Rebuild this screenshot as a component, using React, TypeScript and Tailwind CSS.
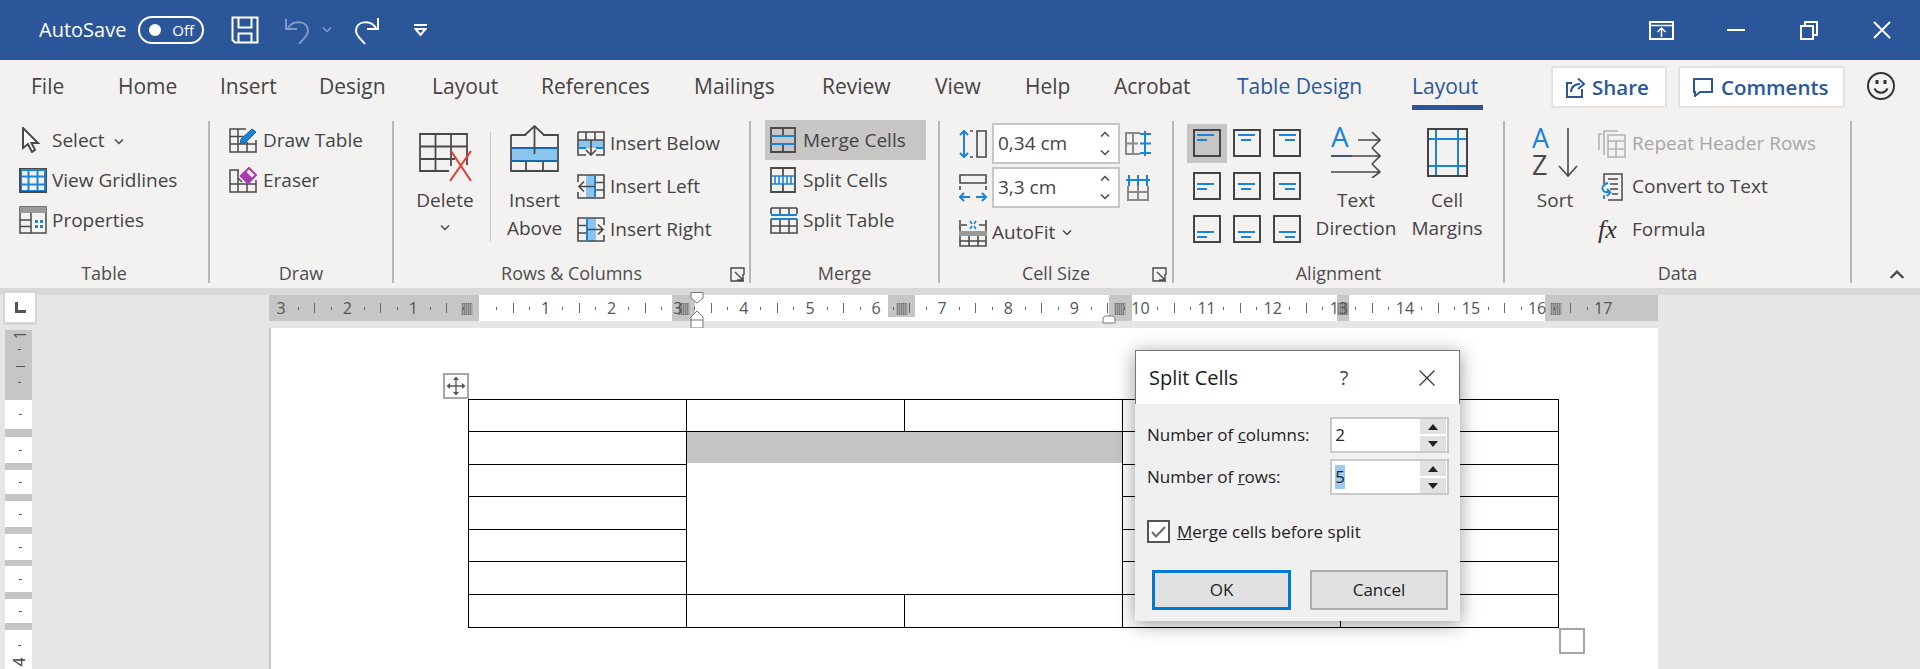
import type { ReactNode } from 'react';
import clsx from 'clsx';

const DK = '#4a4a4a';
const BL = '#1b84d8';
const LB = '#8cc4f0';

function Svg({ w, h, className, children }: { w: number; h: number; className?: string; children: ReactNode }) {
  return (
    <svg width={w} height={h} viewBox={`0 0 ${w} ${h}`} fill="none" stroke={DK} strokeWidth={2} className={clsx('shrink-0', className)}>
      {children}
    </svg>
  );
}

function Chevron({ up, color = DK, className }: { up?: boolean; color?: string; className?: string }) {
  return (
    <Svg w={10} h={6} className={className}>
      <path d={up ? 'M1 5.5 5 1.5 9 5.5' : 'M1 .5 5 4.5 9 .5'} stroke={color} strokeWidth={1.5} />
    </Svg>
  );
}

// title bar icons
const SaveIcon = () => (
  <Svg w={28} h={28}>
    <g stroke="#fff">
      <path d="M1.5 1.5H26.5V26.5H4L1.5 24Z" />
      <path d="M7.5 1.5V11.5H20.5V1.5M7.5 26.5V17.5H20.5V26.5" />
    </g>
  </Svg>
);
const UndoIcon = () => (
  <Svg w={26} h={28}>
    <g stroke="#7f9ac6">
      <path d="M2 3V13H13M4 12C10 3 24 5 24 15 24 20 18 24 15 28" />
    </g>
  </Svg>
);
const RedoIcon = () => (
  <Svg w={26} h={29}>
    <g stroke="#fff">
      <path d="M24 2V13H13M22 12C16 3 2 5 2 15 2 20 8 24 11 28" />
    </g>
  </Svg>
);
const CustomizeIcon = () => (
  <Svg w={13} h={12}>
    <g stroke="#fff">
      <path d="M0 1H13M1.5 5H11.5L6.5 11Z" />
    </g>
  </Svg>
);
const DisplayIcon = () => (
  <Svg w={25} h={19}>
    <g stroke="#fff">
      <rect x="1" y="1" width="23" height="17" />
      <path d="M1 4.5H24M12.5 16V8M8.5 11 12.5 7 16.5 11" strokeWidth={1.5} />
    </g>
  </Svg>
);
const RestoreIcon = () => (
  <Svg w={18} h={19}>
    <g stroke="#fff">
      <rect x="1" y="5" width="12" height="13" />
      <path d="M5 5V1H17V14H13" />
    </g>
  </Svg>
);
const CloseIcon = () => (
  <Svg w={18} h={18}>
    <path d="M1 1 17 17M17 1 1 17" stroke="#fff" />
  </Svg>
);

// top right
const ShareIcon = () => (
  <Svg w={21} h={21}>
    <g stroke="#2b579a">
      <path d="M7 6H2V20H17V12" />
      <path d="M6 15C6 10 10 7 15 7M13 1.5 19 7 13 12" />
    </g>
  </Svg>
);
const CommentIcon = () => (
  <Svg w={20} h={19}>
    <path d="M1 1H19V14H7L2 18V14H1Z" stroke="#2b579a" />
  </Svg>
);
const Smiley = () => (
  <Svg w={28} h={28}>
    <g stroke="#333">
      <circle cx="14" cy="14" r="13" />
      <path d="M7.5 16.5C10 22 18 22 20.5 16.5" />
      <path d="M10 8V12M18 8V12" strokeWidth={3} />
    </g>
  </Svg>
);

// table group
const CursorIcon = () => (
  <Svg w={28} h={26}>
    <path d="M4 1V21L9 17 13 25 16 23 12.5 16H19Z" fill="#fff" />
  </Svg>
);
const GridlinesIcon = () => (
  <Svg w={28} h={25}>
    <rect x="1" y="1" width="26" height="23" stroke={DK} />
    <path d="M2 8.5H26M2 16.5H26M9.5 2V23M18.5 2V23" stroke={BL} />
    <path d="M2 2H26V23H2Z" stroke={BL} />
    <path d="M1 1V24H27" stroke={DK} />
  </Svg>
);
const PropertiesIcon = () => (
  <Svg w={28} h={28}>
    <rect x="1" y="1" width="26" height="26" strokeWidth={1.5} />
    <rect x="1" y="1" width="26" height="6" fill="#9a9a9a" stroke="none" />
    <path d="M1 14H12M1 20.5H12M12 7V27" strokeWidth={1.5} />
    <rect x="15" y="12" width="10" height="12" fill="#fff" stroke="none" />
    <path d="M16 14H19V17H16ZM21 14H24V17H21ZM16 19H19V22H16ZM21 19H24V22H21Z" fill={BL} stroke="none" />
  </Svg>
);

// draw group
const DrawTableIcon = () => (
  <Svg w={28} h={25}>
    <g strokeWidth={1.5}>
      <path d="M17 1H1V24H27V12M1 8.5H14M1 16H27M9 1V24M18 14V24" />
    </g>
    <path d="M11 16 12 11 23 1 27 4 16 15Z" fill={BL} stroke="#0f5ea8" strokeWidth={1} />
  </Svg>
);
const EraserIcon = () => (
  <Svg w={28} h={26}>
    <g strokeWidth={1.5}>
      <path d="M10 3H1V25H27V13M1 17H27M9 3V25M18 17V25M9 11 13 15" />
    </g>
    <path d="M12 9 20 1 27 8 19 16Z" fill="#f4e9f6" stroke="#a63cb0" />
    <path d="M12 9 16 5 23 12 19 16Z" fill="#a63cb0" stroke="#a63cb0" />
  </Svg>
);

// rows & columns
const DeleteIcon = () => (
  <Svg w={53} h={49}>
    <path d="M48 32V1H1V38H30M1 13.5H48M1 26H36M16.5 1V38M32 1V33" strokeWidth={1.8} />
    <path d="M31 49 52 19M32 19 52 49" stroke="#e8392f" strokeWidth={2} transform="translate(0 -1)" />
  </Svg>
);
const InsertAboveIcon = () => (
  <Svg w={49} h={47}>
    <rect x="1" y="23" width="47" height="13" fill={LB} stroke="none" />
    <path d="M1 10V46H48V10H33M16 10H1M1 36H48M16 36V46M33 36V46" strokeWidth={1.8} />
    <path d="M1 23H48M1 36H48" stroke="#1468b0" strokeWidth={2} />
    <path d="M24.5 29V2M15 10 24.5 1 34 10" strokeWidth={1.8} />
  </Svg>
);
const InsertBelowIcon = () => (
  <Svg w={28} h={25}>
    <rect x="1" y="9" width="26" height="8" fill={LB} stroke="none" />
    <path d="M1 1H27V24H19M9 24H1V1M1 9H27M9 1V9M18 1V9" strokeWidth={1.6} />
    <path d="M1 17H9M19 17H27" stroke={BL} />
    <path d="M14 9V24M9 19 14 24 19 19" strokeWidth={1.6} />
  </Svg>
);
const InsertLeftIcon = () => (
  <Svg w={28} h={25}>
    <rect x="9" y="1" width="10" height="23" fill={LB} stroke="none" />
    <path d="M9 1H27V24H9M9 1H1V8M1 18V24H9M18 1V24M18 8.5H27M18 16H27" strokeWidth={1.6} />
    <path d="M18 1V24" stroke={BL} />
    <path d="M18 12.5H2M7 7.5 2 12.5 7 17.5" strokeWidth={1.6} />
  </Svg>
);
const InsertRightIcon = () => (
  <Svg w={28} h={25}>
    <rect x="9" y="1" width="10" height="23" fill={LB} stroke="none" />
    <path d="M19 1H1V24H19M19 1H27V8M27 18V24H19M10 1V24M1 8.5H10M1 16H10" strokeWidth={1.6} />
    <path d="M10 1V24" stroke={BL} />
    <path d="M10 12.5H26M21 7.5 26 12.5 21 17.5" strokeWidth={1.6} />
  </Svg>
);

// merge
const MergeCellsIcon = () => (
  <Svg w={26} h={26}>
    <path d="M1 1H25V25H1ZM13 1V9M13 17V25" strokeWidth={1.8} />
    <path d="M1 9H25M1 17H25" stroke={BL} />
  </Svg>
);
const SplitCellsIcon = () => (
  <Svg w={26} h={26}>
    <path d="M1 1H25V25H1ZM13 1V9M13 17V25" strokeWidth={1.8} />
    <path d="M1 9H25M1 17H25M5 9V17M9 9V17M13 9V17M17 9V17M21 9V17" stroke={BL} strokeWidth={1.6} />
  </Svg>
);
const SplitTableIcon = () => (
  <Svg w={28} h={27}>
    <path d="M1 12V26H27V12M1 19H27M10 12V26M19 12V26M1 1H27M1 1V7M27 1V7M10 1V7M19 1V7" strokeWidth={1.6} />
    <path d="M1 8H27M1 12H27" stroke={BL} />
  </Svg>
);

// cell size
const RowHeightIcon = () => (
  <Svg w={28} h={28}>
    <path d="M11 1H14M11 27H14M18 1H27V27H18Z" strokeWidth={1.6} />
    <path d="M5 1V27M1 5 5 1 9 5M1 23 5 27 9 23" stroke={BL} />
  </Svg>
);
const ColWidthIcon = () => (
  <Svg w={28} h={28}>
    <path d="M1 1H27V9H1ZM1 12V16M27 12V16" strokeWidth={1.6} />
    <path d="M1 24H11M17 24H27M5 20 1 24 5 28M23 20 27 24 23 28" stroke={BL} transform="translate(0 -1)" />
  </Svg>
);
const DistRowsIcon = () => (
  <Svg w={27} h={27}>
    <path d="M15 3H1V24H15M1 13.5H13M8 3V24" stroke="#8a8a8a" />
    <path d="M20 1V26M15 4H26M15 13.5H26M15 23H26" stroke={BL} />
  </Svg>
);
const DistColsIcon = () => (
  <Svg w={26} h={27}>
    <path d="M3 12V26H23V12M13 12V26M3 18H23" stroke="#8a8a8a" />
    <path d="M1 6H25M4 1V12M13 1V12M22 1V12" stroke={BL} />
  </Svg>
);
const AutoFitIcon = () => (
  <Svg w={28} h={28}>
    <path d="M1 1V12M27 1V12M2 6H8M20 6H26" strokeWidth={1.6} />
    <path d="M11 2 13 5M17 2 15 5M11 10 13 7M17 10 15 7" stroke={BL} strokeWidth={1.6} />
    <rect x="0" y="12" width="28" height="5" fill="#9a9a9a" stroke="none" />
    <path d="M1 17V27H27V17M1 22H27M10 17V27M19 17V27" strokeWidth={1.6} />
  </Svg>
);

function AlignIcon({ col, row }: { col: number; row: number }) {
  const y = [6, 12, 17][row];
  const wide = col === 0 ? 'M4 ' : col === 1 ? 'M5 ' : 'M6 ';
  const short = col === 0 ? 'M4 ' : col === 1 ? 'M8 ' : 'M12 ';
  return (
    <Svg w={28} h={28}>
      <rect x="1" y="1" width="26" height="26" stroke="#444" />
      <path d={`${wide}${y}h17${short}${y + 5}h10`} stroke={BL} />
    </Svg>
  );
}

const TextDirectionIcon = () => (
  <Svg w={50} h={51}>
    <text x="0" y="20" fontSize="28" fill={BL} stroke="none" fontFamily="Open Sans, sans-serif">A</text>
    <path d="M0 29H21" stroke={BL} />
    <path d="M27 13H48M41 5 49 13 41 21M0 29H48M41 21 49 29 41 37M0 45H48M41 37 49 45 41 51" strokeWidth={1.6} transform="translate(0 0)" />
  </Svg>
);
const CellMarginsIcon = () => (
  <Svg w={41} h={49}>
    <rect x="1" y="1" width="39" height="47" stroke="#444" />
    <path d="M2 11H39M2 38H39M9 2V47M31 2V47" stroke={BL} />
  </Svg>
);

// data
const SortIcon = () => (
  <Svg w={46} h={50}>
    <text x="0" y="20" fontSize="27" fill={BL} stroke="none" fontFamily="Open Sans, sans-serif">A</text>
    <text x="0" y="47" fontSize="27" fill={DK} stroke="none" fontFamily="Open Sans, sans-serif">Z</text>
    <path d="M36 0V48M27 38 36 48 45 38" strokeWidth={1.6} />
  </Svg>
);
const RepeatIcon = () => (
  <Svg w={28} h={28}>
    <g stroke="#b5b3b1" strokeWidth={1.6}>
      <path d="M6 25V1H20M1 20V4H4M10 5H27V27H10ZM10 11H27M18 11V27M10 19H27" />
    </g>
  </Svg>
);
const ConvertIcon = () => (
  <Svg w={28} h={29}>
    <path d="M6 12V2H24V28H10M10 7H20M12 12H20M12 17H20M14 22H20" strokeWidth={1.5} />
    <path d="M10 11C5 12 2 17 7 20H12M9 17 12.5 20.5 9 24M6 23V27" stroke={BL} strokeWidth={1.8} />
  </Svg>
);
const LauncherIcon = () => (
  <Svg w={15} h={15}>
    <path d="M14 8V1H1V14H14M5 5 13 13M7 13H13V7" strokeWidth={1.4} />
  </Svg>
);

function Small({ icon, label, className, gap }: { icon: ReactNode; label: string; className?: string; gap?: string }) {
  return (
    <div className={clsx('flex items-center whitespace-nowrap', gap ?? 'gap-[5px]', className)}>
      {icon}
      <span>{label}</span>
    </div>
  );
}

function Large({ icon, lines, offset, className, chevron }: { icon: ReactNode; lines: string[]; offset: string; className: string; chevron?: boolean }) {
  return (
    <div className={clsx('flex flex-col items-center leading-[28px]', className)}>
      <div className="h-[70px] w-full flex justify-center">
        <div className={offset}>{icon}</div>
      </div>
      {lines.map((l) => (
        <span key={l} className="whitespace-nowrap">{l}</span>
      ))}
      {chevron && <Chevron className="mt-[11px]" />}
    </div>
  );
}

function Group({ label, className, launcher, launcherRight, children }: { label: string; className: string; launcher?: boolean; launcherRight?: string; children: ReactNode }) {
  return (
    <>
      <div className={clsx('relative flex flex-col shrink-0', className)}>
        <div className="h-[145px] flex">{children}</div>
        <div className="h-[24px] flex items-center justify-center text-[18px] text-[#4d4d4d]">{label}</div>
        {launcher && (
          <div className={clsx('absolute top-[151px]', launcherRight)}>
            <LauncherIcon />
          </div>
        )}
      </div>
      <div className="my-[5px] w-[2px] shrink-0 bg-[#b9b7b5]" />
    </>
  );
}

function SizeInput({ value }: { value: string }) {
  return (
    <div className="w-[128px] h-[41px] border-2 border-[#c8c6c4] bg-white flex items-center justify-between pl-[4px] pr-[8px]">
      <span>{value}</span>
      <div className="flex flex-col gap-[13px]">
        <Chevron up />
        <Chevron />
      </div>
    </div>
  );
}

const tabs: [string, string][] = [
  ['File', 'w-[87px]'],
  ['Home', 'w-[102px]'],
  ['Insert', 'w-[99px]'],
  ['Design', 'w-[113px]'],
  ['Layout', 'w-[109px]'],
  ['References', 'w-[153px]'],
  ['Mailings', 'w-[128px]'],
  ['Review', 'w-[113px]'],
  ['View', 'w-[90px]'],
  ['Help', 'w-[89px]'],
  ['Acrobat', 'w-[123px]'],
];

function TitleBar() {
  return (
    <div className="h-[60px] bg-[#2b579a] text-white flex items-center">
      <span className="ml-[39px] w-[99px] text-[20px]">AutoSave</span>
      <div className="w-[66px] h-[28px] rounded-full border-2 border-white flex items-center justify-between pl-[9px] pr-[8px]">
        <span className="w-[12px] h-[12px] rounded-full bg-white" />
        <span className="text-[15px] leading-none">Off</span>
      </div>
      <div className="ml-[27px]"><SaveIcon /></div>
      <div className="ml-[25px]"><UndoIcon /></div>
      <Chevron color="#7f9ac6" className="ml-[12px]" />
      <div className="ml-[22px]"><RedoIcon /></div>
      <div className="ml-[34px]"><CustomizeIcon /></div>
      <div className="ml-auto mr-[29px] flex items-center">
        <DisplayIcon />
        <div className="ml-[53px] w-[18px] h-[2px] bg-white" />
        <div className="ml-[55px]"><RestoreIcon /></div>
        <div className="ml-[55px]"><CloseIcon /></div>
      </div>
    </div>
  );
}

function TabRow() {
  return (
    <div className="h-[56px] bg-[#f3f2f1] flex pl-[31px] text-[21px] text-[#444]">
      {tabs.map(([name, w]) => (
        <div key={name} className={clsx('h-[53px] flex items-center', w)}>{name}</div>
      ))}
      <div className="h-[53px] w-[175px] flex items-center text-[#2b579a]">Table Design</div>
      <div className="relative h-[53px] w-[140px] flex items-center text-[#2b579a] font-medium">
        Layout
        <span className="absolute left-0 top-[45px] w-[71px] h-[5px] bg-[#2b579a]" />
      </div>
      <div className="mt-[7px] w-[114px] h-[40px] bg-white border border-[#e1dfdd] shadow-[0_0_2px_rgba(0,0,0,0.15)] flex items-center pl-[12px] gap-[6px] text-[20.5px] font-semibold text-[#2b579a]">
        <ShareIcon />
        Share
      </div>
      <div className="ml-[13px] mt-[7px] w-[165px] h-[40px] bg-white border border-[#e1dfdd] shadow-[0_0_2px_rgba(0,0,0,0.15)] flex items-center pl-[13px] gap-[8px] text-[20.5px] font-semibold text-[#2b579a]">
        <CommentIcon />
        Comments
      </div>
      <div className="ml-[23px] mt-[12px]"><Smiley /></div>
    </div>
  );
}

function Ribbon() {
  return (
    <div className="h-[172px] bg-[#f3f2f1] flex text-[19px] text-[#444]">
      <Group label="Table" className="w-[208px]">
        <div className="pt-[4px] pl-[19px] flex flex-col">
          <Small icon={<CursorIcon />} label="Select" className="h-[40px]" />
          <Small icon={<GridlinesIcon />} label="View Gridlines" className="h-[40px]" />
          <Small icon={<PropertiesIcon />} label="Properties" className="h-[40px]" />
        </div>
        <Chevron className="absolute left-[114px] top-[23px]" />
      </Group>
      <Group label="Draw" className="w-[182px]">
        <div className="pt-[4px] pl-[19px] flex flex-col">
          <Small icon={<DrawTableIcon />} label="Draw Table" className="h-[40px]" gap="gap-[6px]" />
          <Small icon={<EraserIcon />} label="Eraser" className="h-[40px]" gap="gap-[6px]" />
        </div>
      </Group>
      <Group label="Rows & Columns" className="w-[355px]" launcher launcherRight="right-[4px]">
        <Large icon={<DeleteIcon />} lines={['Delete']} offset="mt-[17px]" className="ml-[16px] w-[70px]" chevron />
        <div className="ml-[10px] mt-[16px] w-px h-[109px] bg-[#c8c6c4]" />
        <Large icon={<InsertAboveIcon />} lines={['Insert', 'Above']} offset="mt-[9px]" className="ml-[6px] w-[75px]" />
        <div className="ml-[5px] pt-[6px] flex flex-col">
          <Small icon={<InsertBelowIcon />} label="Insert Below" className="h-[43px]" />
          <Small icon={<InsertLeftIcon />} label="Insert Left" className="h-[43px]" />
          <Small icon={<InsertRightIcon />} label="Insert Right" className="h-[43px]" />
        </div>
      </Group>
      <Group label="Merge" className="w-[187px]">
        <div className="pt-[4px] pl-[14px] flex flex-col">
          <Small icon={<MergeCellsIcon />} label="Merge Cells" className="h-[40px] w-[161px] pl-[5px] bg-[#c8c6c4]" gap="gap-[7px]" />
          <Small icon={<SplitCellsIcon />} label="Split Cells" className="h-[40px] pl-[5px]" gap="gap-[7px]" />
          <Small icon={<SplitTableIcon />} label="Split Table" className="h-[40px] pl-[5px]" gap="gap-[5px]" />
        </div>
      </Group>
      <Group label="Cell Size" className="w-[232px]" launcher launcherRight="right-[5px]">
        <div className="pt-[7px] pl-[19px] flex flex-col gap-[3px]">
          <div className="flex items-center gap-[5px]">
            <RowHeightIcon />
            <SizeInput value="0,34 cm" />
            <DistRowsIcon />
          </div>
          <div className="flex items-center gap-[5px]">
            <ColWidthIcon />
            <SizeInput value="3,3 cm" />
            <DistColsIcon />
          </div>
          <div className="flex items-center gap-[5px] h-[43px]">
            <AutoFitIcon />
            <span>AutoFit</span>
            <Chevron className="ml-[2px]" />
          </div>
        </div>
      </Group>
      <Group label="Alignment" className="w-[329px]">
        <div className="ml-[13px] mt-[8px] grid grid-cols-[repeat(3,40px)] auto-rows-[39px] gap-y-[4px] self-start">
          {[0, 1, 2].flatMap((row) =>
            [0, 1, 2].map((col) => (
              <div key={`${row}-${col}`} className={clsx('flex justify-center pt-[5px]', row === 0 && col === 0 && 'bg-[#c8c6c4]')}>
                <AlignIcon col={col} row={row} />
              </div>
            )),
          )}
        </div>
        <Large icon={<TextDirectionIcon />} lines={['Text', 'Direction']} offset="mt-[11px]" className="ml-[4px] w-[90px]" />
        <Large icon={<CellMarginsIcon />} lines={['Cell', 'Margins']} offset="mt-[12px]" className="ml-[6px] w-[80px]" />
      </Group>
      <Group label="Data" className="w-[345px]">
        <Large icon={<SortIcon />} lines={['Sort']} offset="mt-[12px]" className="ml-[15px] w-[70px]" />
        <div className="ml-[8px] pt-[6px] flex flex-col">
          <Small icon={<RepeatIcon />} label="Repeat Header Rows" className="h-[43px] text-[#a8a6a4]" gap="gap-[6px]" />
          <Small icon={<ConvertIcon />} label="Convert to Text" className="h-[43px]" gap="gap-[6px]" />
          <div className="h-[43px] flex items-center">
            <span className="w-[34px] text-[26px] leading-none italic font-['Liberation_Serif',serif] text-[#333]">fx</span>
            <span>Formula</span>
          </div>
        </div>
      </Group>
      <div className="ml-[40px] mt-[155px]"><Chevron up className="scale-[1.6]" /></div>
    </div>
  );
}

const Hatch = () => (
  <svg width={11} height={12} className="block">
    <rect width={11} height={12} fill="#6e6e6e" />
    <path d="M2 0V12M4 0V12M6 0V12M8 0V12M10 0V12M0 2H11M0 4H11M0 6H11M0 8H11M0 10H11" stroke="#c4c4c4" strokeWidth={0.5} />
  </svg>
);

const rulerShade = [
  [0, 210, 26],
  [403, 23, 26],
  [619, 27, 22],
  [840, 23, 26],
  [1068, 12, 26],
  [1276, 113, 26],
];
const hatchAt = [198, 415, 633, 851, 1074, 1287];

function HRuler() {
  const cm = Array.from({ length: 21 }, (_, i) => i - 3);
  const at = (n: number) => 210.5 + 66.1 * n;
  return (
    <div className="relative w-[1389px] h-[26px] bg-white text-[#555] text-[16px] leading-none">
      {rulerShade.map(([x, w, h]) => (
        <div key={x} className="absolute top-0 bg-[#c6c6c6]" style={{ left: x, width: w, height: h }} />
      ))}
      {hatchAt.map((x) => (
        <div key={x} className="absolute top-[8px] -translate-x-1/2" style={{ left: x }}>
          <Hatch />
        </div>
      ))}
      {cm.map((n) => (
        <div key={n}>
          {n !== 0 && (
            <span className="absolute top-[5px] -translate-x-1/2" style={{ left: at(n) }}>
              {Math.abs(n)}
            </span>
          )}
          {n < 17 && (
            <>
              <span className="absolute top-[12px] w-px h-[3px] bg-[#666]" style={{ left: at(n + 0.25) }} />
              <span className="absolute top-[8px] w-px h-[10px] bg-[#666]" style={{ left: at(n + 0.5) }} />
              <span className="absolute top-[12px] w-px h-[3px] bg-[#666]" style={{ left: at(n + 0.75) }} />
            </>
          )}
        </div>
      ))}
      <svg width={16} height={38} className="absolute left-[421px] -top-[3px]" fill="#fff" stroke="#777" strokeWidth={1}>
        <path d="M1 .5H13V6L7 11 1 6Z" />
        <path d="M7 19 13 25V36H1V25Z" />
        <path d="M1 28H13" />
      </svg>
      <svg width={14} height={9} className="absolute left-[833px] top-[20px]" fill="#fff" stroke="#777" strokeWidth={1}>
        <path d="M1 8V3L3 1H11L13 3V8Z" />
      </svg>
    </div>
  );
}

// [height, grey?] for the vertical ruler below the shaded top margin
const vSegments: [number, boolean][] = [
  [29, false], [8, true], [26, false], [7, true], [24, false], [7, true], [26, false],
  [7, true], [26, false], [6, true], [26, false], [7, true], [24, false], [7, true], [39, false],
];

function VRuler() {
  return (
    <div className="ml-[5px] mt-[5px] w-[27px] flex flex-col text-[#555] text-[16px] leading-none">
      <div className="relative h-[70px] bg-[#c6c6c6] overflow-hidden">
        <span className="absolute left-[10px] -top-[3px] -rotate-90">1</span>
        <span className="absolute left-[13px] top-[19px] w-[3px] h-px bg-[#555]" />
        <span className="absolute left-[11px] top-[36px] w-[9px] h-px bg-[#555]" />
        <span className="absolute left-[13px] top-[52px] w-[3px] h-px bg-[#555]" />
      </div>
      {vSegments.map(([h, grey], i) => (
        <div key={i} className={clsx('relative flex items-center justify-center shrink-0', grey ? 'bg-[#c6c6c6]' : 'bg-white')} style={{ height: h }}>
          {!grey && i < 14 && <span className="w-[3px] h-px bg-[#555] ml-[3px]" />}
          {i === 14 && (
            <>
              <span className="absolute left-[13px] top-[15px] w-[3px] h-px bg-[#555]" />
              <span className="absolute left-[9px] top-[24px] -rotate-90 text-[#444]">4</span>
            </>
          )}
        </div>
      ))}
    </div>
  );
}

const rowHeights = ['h-[32px]', 'h-[33px]', 'h-[32px]', 'h-[33px]', 'h-[32px]', 'h-[33px]', 'h-[33px]'];
const cell = 'border border-black p-0 w-[218px]';

function DocTable() {
  return (
    <div className="relative w-[1091px]">
      <div className="absolute -left-[25px] -top-[26px] w-[26px] h-[26px] border-2 border-[#a6a6a6] bg-white flex items-center justify-center">
        <svg width={20} height={20} viewBox="0 0 20 20" fill="#555" stroke="#555" strokeWidth={1.3}>
          <path d="M10 2V18M2 10H18" fill="none" />
          <path d="M10 .5 13 4H7ZM10 19.5 13 16H7ZM.5 10 4 7V13ZM19.5 10 16 7V13Z" stroke="none" />
        </svg>
      </div>
      <table className="border-collapse table-fixed w-[1091px]">
        <tbody>
          {rowHeights.map((h, r) => (
            <tr key={r} className={h}>
              <td className={cell} />
              {(r === 0 || r === 6) && (
                <>
                  <td className={cell} />
                  <td className={cell} />
                </>
              )}
              {r === 1 && (
                <td colSpan={2} rowSpan={5} className="border border-black p-0 align-top">
                  <div className="h-[31px] bg-[#c4c4c4]" />
                </td>
              )}
              <td className={cell} />
              <td className={cell} />
            </tr>
          ))}
        </tbody>
      </table>
      <div className="absolute left-[1091px] top-[229px] w-[26px] h-[26px] border-2 border-[#a6a6a6] bg-white" />
    </div>
  );
}

function SpinField({ value, selected }: { value: string; selected?: boolean }) {
  return (
    <div className="w-[119px] h-[36px] border-2 border-[#c9c9c9] bg-white flex items-center pl-[3px]">
      <span className={clsx('w-[10px] h-[24px] leading-[24px] text-center', selected && 'bg-[#9ccaf0]')}>{value}</span>
      <div className="ml-auto mr-[1px] w-[26px] h-[32px] flex flex-col justify-between">
        <div className="h-[15px] bg-[#e1e1e1] flex items-center justify-center">
          <svg width={10} height={6} fill="#222"><path d="M5 0 10 6H0Z" /></svg>
        </div>
        <div className="h-[15px] bg-[#e1e1e1] flex items-center justify-center">
          <svg width={10} height={6} fill="#222"><path d="M0 0H10L5 6Z" /></svg>
        </div>
      </div>
    </div>
  );
}

function SplitDialog() {
  return (
    <div className="absolute left-[864px] top-[22px] w-[325px] h-[271px] flex flex-col shadow-[0_3px_18px_rgba(0,0,0,0.4)] text-[#222] text-[17px]">
      <div className="h-[54px] bg-white border border-b-0 border-[#777] flex items-center pl-[13px] text-[20px] text-[#1a1a1a]">
        <span className="w-[190px]">Split Cells</span>
        <span className="w-[10px] text-center text-[#444]">?</span>
        <svg width={16} height={16} className="ml-[70px]" stroke="#333" strokeWidth={1.2}>
          <path d="M.5 .5 15.5 15.5M15.5 .5 .5 15.5" />
        </svg>
      </div>
      <div className="flex-1 bg-[#f0f0f0] pl-[12px] pt-[13px] flex flex-col">
        <div className="flex items-center">
          <span className="w-[183px]">Number of <span className="underline">c</span>olumns:</span>
          <SpinField value="2" />
        </div>
        <div className="mt-[6px] flex items-center">
          <span className="w-[183px]">Number of <span className="underline">r</span>ows:</span>
          <SpinField value="5" selected />
        </div>
        <div className="mt-[24px] flex items-center gap-[7px]">
          <div className="w-[23px] h-[23px] border-2 border-[#555] bg-white flex items-center justify-center">
            <svg width={15} height={12} fill="none" stroke="#6a6a6a" strokeWidth={2}><path d="M1 6 5 10.5 14 1" /></svg>
          </div>
          <span><span className="underline">M</span>erge cells before split</span>
        </div>
        <div className="mt-[25px] ml-[5px] flex gap-[19px]">
          <div className="w-[139px] h-[40px] border-[3px] border-[#0078d7] bg-[#e1e1e1] flex items-center justify-center">OK</div>
          <div className="w-[138px] h-[40px] border-2 border-[#adadad] bg-[#e1e1e1] flex items-center justify-center">Cancel</div>
        </div>
      </div>
    </div>
  );
}

export default function App() {
  return (
    <div className="w-[1920px] h-[669px] overflow-hidden bg-[#e6e6e6] font-['Open_Sans',sans-serif]">
      <TitleBar />
      <TabRow />
      <Ribbon />
      <div className="h-[7px] bg-[#d9d9d9]" />
      <div className="flex">
        <div className="w-[269px] shrink-0">
          <div className="relative ml-[3px] -mt-[5px] w-[34px] h-[35px] bg-[#d6d6d6] flex items-center justify-center">
            <div className="w-[30px] h-[29px] bg-white flex items-center justify-center">
              <svg width={11} height={11} fill="#555"><path d="M0 0H3V8H11V11H0Z" /></svg>
            </div>
          </div>
          <VRuler />
        </div>
        <div className="flex flex-col">
          <HRuler />
          <div className="relative mt-[7px] w-[1389px] h-[341px] bg-white border-l-2 border-[#c4c4c4] pl-[197px] pt-[71px]">
            <DocTable />
            <SplitDialog />
          </div>
        </div>
      </div>
    </div>
  );
}
